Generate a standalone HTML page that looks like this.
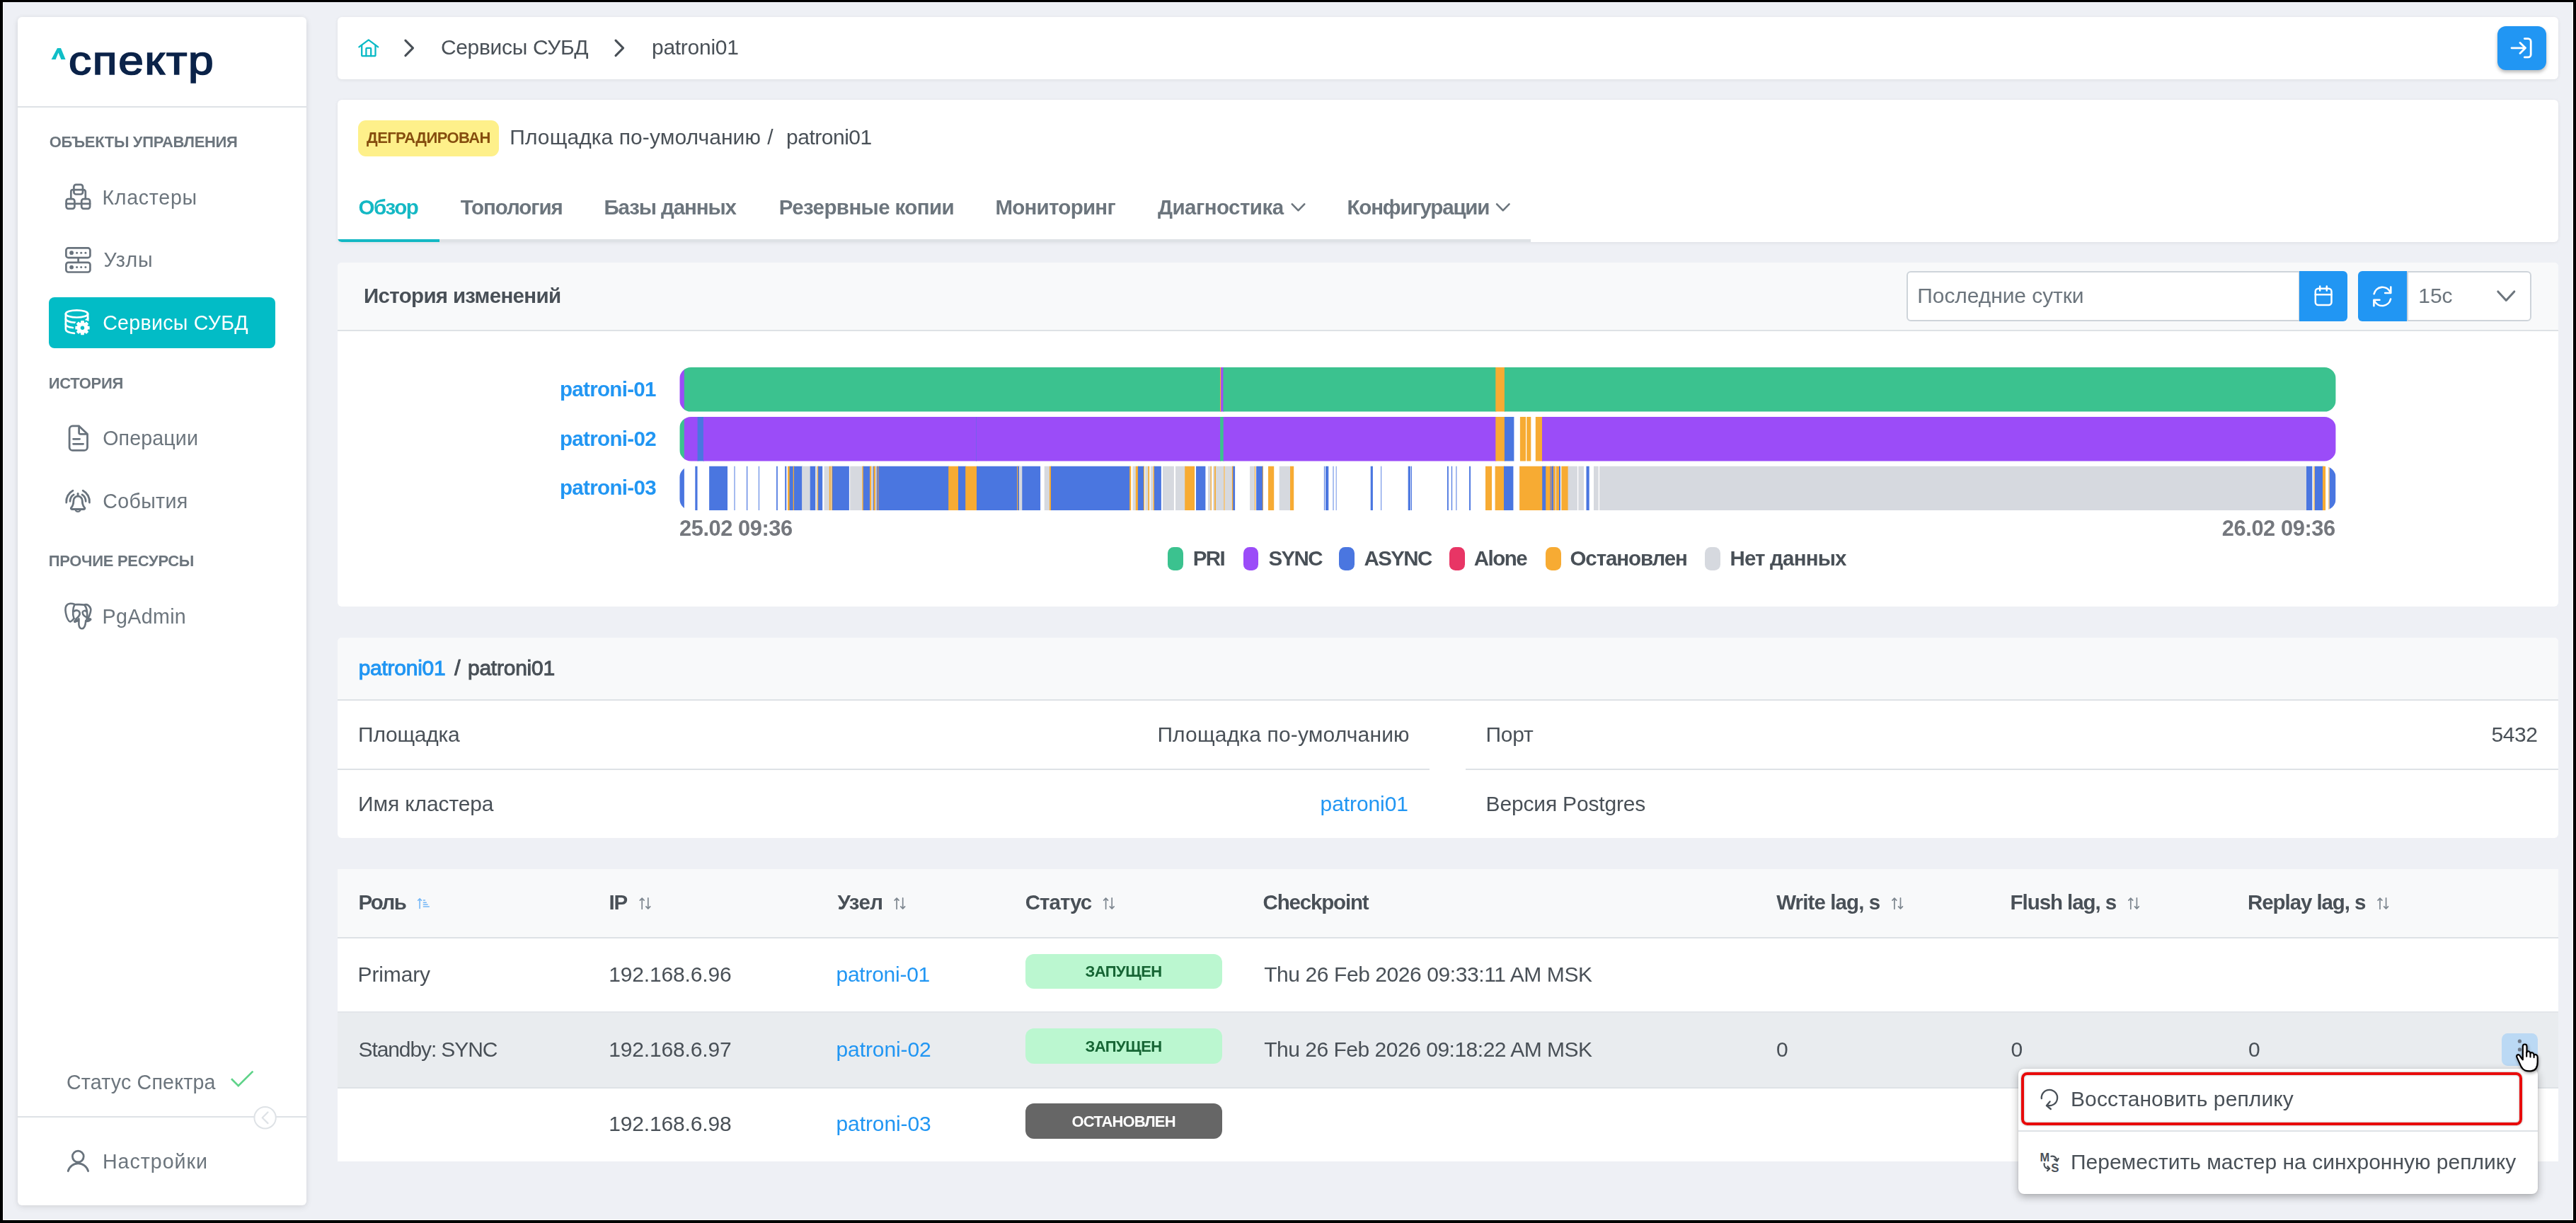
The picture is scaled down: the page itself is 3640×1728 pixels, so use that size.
<!DOCTYPE html>
<html lang="ru"><head><meta charset="utf-8"><title>patroni01</title>
<style>
html,body{margin:0;padding:0}
body{width:3640px;height:1728px;background:#000;overflow:hidden;position:relative;font-family:"Liberation Sans",sans-serif}
.abs{position:absolute;display:block}
.t{position:absolute;white-space:pre;line-height:1;display:block}
.card{position:absolute;background:#fff;border-radius:6px;overflow:hidden}
.sh{box-shadow:0 1px 5px rgba(0,0,0,.075)}
</style></head><body><div id="app" style="position:absolute;left:0;top:0;width:3640px;height:1728px">
<div class="abs" style="left:4px;top:3px;width:3632px;height:1721px;background:#eef0f5;box-shadow:inset 1px 0 #fbfbfd,inset -1px -1px #fff"></div>

<div class="card" style="left:25px;top:24px;width:408px;height:1679px;box-shadow:0 3px 10px rgba(0,0,0,.09),0 0 6px rgba(0,0,0,.04);overflow:visible"></div>
<div class="abs" style="left:25px;top:150px;width:408.0px;height:2.0px;background:#dee2e6"></div>
<div class="abs" style="left:25px;top:1577.2px;width:408.0px;height:2.0px;background:#dee2e6"></div>
<div class="abs" style="left:69px;top:420.4px;width:320.2px;height:71.6px;background:#02bcc6;border-radius:8px"></div>
<div class="card sh" style="left:477px;top:24px;width:3138px;height:87.5px"></div>
<div class="abs" style="left:3529px;top:36.6px;width:68.5px;height:62.4px;background:#2196f3;border-radius:12px;box-shadow:0 3px 5px rgba(0,0,0,.28)"></div>
<div class="card sh" style="left:477px;top:141px;width:3138px;height:200.5px"><div class="abs" style="left:0;top:196.5px;width:1686px;height:4px;background:#dee2e6"></div><div class="abs" style="left:0;top:196.5px;width:144.3px;height:4px;background:#14b8c4"></div></div>
<div class="abs" style="left:505.8px;top:169.8px;width:199.6px;height:51.3px;background:#fef08a;border-radius:11px"></div>
<div class="card" style="left:477px;top:371px;width:3138px;height:486px"><div class="abs" style="left:0;top:0;width:3138px;height:95.4px;background:#f8f9fa;border-bottom:2px solid #dee2e6"></div></div>
<div class="abs" style="left:2693.6px;top:383.4px;width:556.4px;height:70.2px;background:#fff;border:2px solid #ced4da;border-radius:6px 0 0 6px;box-sizing:border-box"></div>
<div class="abs" style="left:3248.9px;top:383px;width:68.4px;height:71.0px;background:#2196f3;border-radius:0 6px 6px 0"></div>
<div class="abs" style="left:3332px;top:383px;width:68.8px;height:71.0px;background:#2196f3;border-radius:6px 0 0 6px"></div>
<div class="abs" style="left:3400.8px;top:383.4px;width:176.0px;height:70.2px;background:#fff;border:2px solid #ced4da;border-radius:0 6px 6px 0;box-sizing:border-box"></div>
<svg class="abs" style="left:958px;top:517px" width="2346" height="68" viewBox="958 517 2346 68">
<clipPath id="cb0"><rect x="960.3" y="519.0" width="2340.3" height="62.6" rx="16" ry="16"/></clipPath><g clip-path="url(#cb0)">
<rect x="960.3" y="518.0" width="7.5" height="64.6" fill="#9b4cf8"/>
<rect x="966.8" y="518.0" width="758.2" height="64.6" fill="#3bc28f"/>
<rect x="1724.0" y="518.0" width="2.2" height="64.6" fill="#f7ab33"/>
<rect x="1725.2" y="518.0" width="4.2" height="64.6" fill="#9b4cf8"/>
<rect x="1728.4" y="518.0" width="385.9" height="64.6" fill="#3bc28f"/>
<rect x="2113.3" y="518.0" width="13.6" height="64.6" fill="#f7ab33"/>
<rect x="2125.9" y="518.0" width="1174.8" height="64.6" fill="#3bc28f"/>
</g></svg>
<svg class="abs" style="left:958px;top:586px" width="2346" height="68" viewBox="958 586 2346 68">
<clipPath id="cb1"><rect x="960.3" y="588.9" width="2340.3" height="62.6" rx="16" ry="16"/></clipPath><g clip-path="url(#cb1)">
<rect x="960.3" y="587.9" width="7.5" height="64.6" fill="#3bc28f"/>
<rect x="966.8" y="587.9" width="19.8" height="64.6" fill="#9b4cf8"/>
<rect x="985.6" y="587.9" width="9.3" height="64.6" fill="#4a76e0"/>
<rect x="993.9" y="587.9" width="731.2" height="64.6" fill="#9b4cf8"/>
<rect x="1724.1" y="587.9" width="5.6" height="64.6" fill="#3bc28f"/>
<rect x="1728.7" y="587.9" width="385.6" height="64.6" fill="#9b4cf8"/>
<rect x="2113.3" y="587.9" width="13.6" height="64.6" fill="#f7ab33"/>
<rect x="2125.9" y="587.9" width="13.5" height="64.6" fill="#4a76e0"/>
<rect x="2147.9" y="587.9" width="8.1" height="64.6" fill="#f7ab33"/>
<rect x="2157.2" y="587.9" width="6.1" height="64.6" fill="#f7ab33"/>
<rect x="2169.8" y="587.9" width="10.2" height="64.6" fill="#f7ab33"/>
<rect x="2179.0" y="587.9" width="1121.7" height="64.6" fill="#9b4cf8"/>
<rect x="1379.0" y="587.9" width="0.8" height="64.6" fill="#6f63ec"/>
</g></svg>
<svg class="abs" style="left:958px;top:656px" width="2346" height="68" viewBox="958 656 2346 68">
<clipPath id="cb2"><rect x="960.3" y="658.7" width="2340.3" height="62.2" rx="16" ry="16"/></clipPath><g clip-path="url(#cb2)">
<rect x="960.2" y="657.7" width="6.7" height="64.2" fill="#4a76e0"/>
<rect x="982.3" y="657.7" width="3.2" height="64.2" fill="#4a76e0"/>
<rect x="1002.1" y="657.7" width="25.9" height="64.2" fill="#4a76e0"/>
<rect x="1037.3" y="657.7" width="1.4" height="64.2" fill="#4a76e0" fill-opacity="0.7"/>
<rect x="1055.0" y="657.7" width="1.2" height="64.2" fill="#4a76e0"/>
<rect x="1071.9" y="657.7" width="1.0" height="64.2" fill="#4a76e0"/>
<rect x="1097.1" y="657.7" width="1.7" height="64.2" fill="#4a76e0"/>
<rect x="1109.2" y="657.7" width="2.1" height="64.2" fill="#4a76e0"/>
<rect x="1113.0" y="657.7" width="3.6" height="64.2" fill="#f7ab33"/>
<rect x="1115.6" y="657.7" width="6.1" height="64.2" fill="#4a76e0"/>
<rect x="1120.7" y="657.7" width="2.3" height="64.2" fill="#f7ab33"/>
<rect x="1122.0" y="657.7" width="12.1" height="64.2" fill="#4a76e0"/>
<rect x="1133.1" y="657.7" width="12.6" height="64.2" fill="#d6d9df"/>
<rect x="1144.7" y="657.7" width="8.3" height="64.2" fill="#4a76e0"/>
<rect x="1152.0" y="657.7" width="4.0" height="64.2" fill="#d6d9df"/>
<rect x="1155.0" y="657.7" width="2.1" height="64.2" fill="#f7ab33"/>
<rect x="1156.1" y="657.7" width="6.1" height="64.2" fill="#4a76e0"/>
<rect x="1164.5" y="657.7" width="8.3" height="64.2" fill="#d6d9df"/>
<rect x="1171.8" y="657.7" width="3.0" height="64.2" fill="#f7ab33"/>
<rect x="1173.8" y="657.7" width="2.2" height="64.2" fill="#d6d9df"/>
<rect x="1175.0" y="657.7" width="2.1" height="64.2" fill="#f7ab33"/>
<rect x="1176.1" y="657.7" width="23.8" height="64.2" fill="#4a76e0"/>
<rect x="1201.1" y="657.7" width="18.3" height="64.2" fill="#d6d9df"/>
<rect x="1218.4" y="657.7" width="2.4" height="64.2" fill="#f7ab33"/>
<rect x="1219.8" y="657.7" width="10.2" height="64.2" fill="#4a76e0"/>
<rect x="1229.0" y="657.7" width="3.1" height="64.2" fill="#f7ab33"/>
<rect x="1231.1" y="657.7" width="3.6" height="64.2" fill="#d6d9df"/>
<rect x="1233.7" y="657.7" width="2.0" height="64.2" fill="#4a76e0"/>
<rect x="1234.7" y="657.7" width="3.3" height="64.2" fill="#f7ab33"/>
<rect x="1237.0" y="657.7" width="2.7" height="64.2" fill="#d6d9df"/>
<rect x="1238.7" y="657.7" width="1.8" height="64.2" fill="#4a76e0"/>
<rect x="1239.5" y="657.7" width="3.4" height="64.2" fill="#a08c90"/>
<rect x="1241.9" y="657.7" width="99.3" height="64.2" fill="#4a76e0"/>
<rect x="1340.2" y="657.7" width="14.8" height="64.2" fill="#f7ab33"/>
<rect x="1354.0" y="657.7" width="11.2" height="64.2" fill="#4a76e0"/>
<rect x="1364.2" y="657.7" width="16.8" height="64.2" fill="#f7ab33"/>
<rect x="1380.0" y="657.7" width="58.1" height="64.2" fill="#4a76e0"/>
<rect x="1437.1" y="657.7" width="2.1" height="64.2" fill="#f7ab33"/>
<rect x="1438.2" y="657.7" width="2.8" height="64.2" fill="#4a76e0"/>
<rect x="1440.0" y="657.7" width="5.3" height="64.2" fill="#d6d9df"/>
<rect x="1444.3" y="657.7" width="25.8" height="64.2" fill="#4a76e0"/>
<rect x="1475.7" y="657.7" width="8.2" height="64.2" fill="#d6d9df"/>
<rect x="1482.9" y="657.7" width="3.1" height="64.2" fill="#f7ab33"/>
<rect x="1485.0" y="657.7" width="112.1" height="64.2" fill="#4a76e0"/>
<rect x="1596.1" y="657.7" width="2.1" height="64.2" fill="#f7ab33"/>
<rect x="1600.5" y="657.7" width="5.3" height="64.2" fill="#d6d9df"/>
<rect x="1604.8" y="657.7" width="4.1" height="64.2" fill="#f7ab33"/>
<rect x="1607.9" y="657.7" width="9.0" height="64.2" fill="#4a76e0"/>
<rect x="1615.9" y="657.7" width="1.2" height="64.2" fill="#f7ab33"/>
<rect x="1618.2" y="657.7" width="5.1" height="64.2" fill="#d6d9df"/>
<rect x="1622.3" y="657.7" width="1.9" height="64.2" fill="#f7ab33"/>
<rect x="1625.8" y="657.7" width="4.8" height="64.2" fill="#d6d9df"/>
<rect x="1629.6" y="657.7" width="2.4" height="64.2" fill="#f7ab33"/>
<rect x="1631.0" y="657.7" width="9.9" height="64.2" fill="#4a76e0"/>
<rect x="1643.0" y="657.7" width="15.9" height="64.2" fill="#d6d9df"/>
<rect x="1661.0" y="657.7" width="14.2" height="64.2" fill="#d6d9df"/>
<rect x="1674.2" y="657.7" width="13.9" height="64.2" fill="#f7ab33"/>
<rect x="1690.0" y="657.7" width="13.4" height="64.2" fill="#4a76e0"/>
<rect x="1706.9" y="657.7" width="4.7" height="64.2" fill="#d6d9df"/>
<rect x="1710.6" y="657.7" width="1.3" height="64.2" fill="#f7ab33"/>
<rect x="1714.1" y="657.7" width="3.0" height="64.2" fill="#d6d9df"/>
<rect x="1716.1" y="657.7" width="2.8" height="64.2" fill="#f7ab33"/>
<rect x="1717.9" y="657.7" width="12.3" height="64.2" fill="#d6d9df"/>
<rect x="1729.2" y="657.7" width="1.8" height="64.2" fill="#f7ab33" fill-opacity="0.6"/>
<rect x="1731.0" y="657.7" width="10.9" height="64.2" fill="#d6d9df"/>
<rect x="1740.9" y="657.7" width="2.4" height="64.2" fill="#f7ab33"/>
<rect x="1742.3" y="657.7" width="2.8" height="64.2" fill="#4a76e0"/>
<rect x="1766.1" y="657.7" width="7.9" height="64.2" fill="#d6d9df"/>
<rect x="1773.0" y="657.7" width="1.2" height="64.2" fill="#f7ab33"/>
<rect x="1775.1" y="657.7" width="9.8" height="64.2" fill="#4a76e0"/>
<rect x="1783.9" y="657.7" width="0.9" height="64.2" fill="#f7ab33"/>
<rect x="1792.0" y="657.7" width="8.2" height="64.2" fill="#f7ab33"/>
<rect x="1807.7" y="657.7" width="16.3" height="64.2" fill="#d6d9df"/>
<rect x="1823.0" y="657.7" width="5.2" height="64.2" fill="#f7ab33"/>
<rect x="1870.9" y="657.7" width="1.0" height="64.2" fill="#4a76e0"/>
<rect x="1873.0" y="657.7" width="4.3" height="64.2" fill="#4a76e0"/>
<rect x="1883.3" y="657.7" width="1.4" height="64.2" fill="#4a76e0" fill-opacity="0.65"/>
<rect x="1887.6" y="657.7" width="1.2" height="64.2" fill="#4a76e0" fill-opacity="0.65"/>
<rect x="1936.7" y="657.7" width="3.2" height="64.2" fill="#4a76e0"/>
<rect x="1951.0" y="657.7" width="1.2" height="64.2" fill="#4a76e0" fill-opacity="0.75"/>
<rect x="1989.7" y="657.7" width="3.2" height="64.2" fill="#4a76e0"/>
<rect x="1993.8" y="657.7" width="1.2" height="64.2" fill="#4a76e0"/>
<rect x="2045.0" y="657.7" width="1.8" height="64.2" fill="#4a76e0"/>
<rect x="2050.9" y="657.7" width="1.2" height="64.2" fill="#4a76e0"/>
<rect x="2057.1" y="657.7" width="1.5" height="64.2" fill="#4a76e0" fill-opacity="0.65"/>
<rect x="2076.1" y="657.7" width="1.9" height="64.2" fill="#4a76e0"/>
<rect x="2099.0" y="657.7" width="9.0" height="64.2" fill="#f7ab33"/>
<rect x="2112.6" y="657.7" width="13.4" height="64.2" fill="#f7ab33"/>
<rect x="2125.0" y="657.7" width="13.4" height="64.2" fill="#4a76e0"/>
<rect x="2147.1" y="657.7" width="33.1" height="64.2" fill="#f7ab33"/>
<rect x="2179.2" y="657.7" width="6.0" height="64.2" fill="#4a76e0"/>
<rect x="2184.2" y="657.7" width="7.0" height="64.2" fill="#f7ab33"/>
<rect x="2190.2" y="657.7" width="3.9" height="64.2" fill="#a08c90"/>
<rect x="2193.1" y="657.7" width="2.8" height="64.2" fill="#4a76e0"/>
<rect x="2194.9" y="657.7" width="3.9" height="64.2" fill="#f7ab33"/>
<rect x="2197.8" y="657.7" width="2.2" height="64.2" fill="#d6d9df"/>
<rect x="2199.0" y="657.7" width="5.0" height="64.2" fill="#f7ab33"/>
<rect x="2203.0" y="657.7" width="1.9" height="64.2" fill="#4a76e0"/>
<rect x="2206.3" y="657.7" width="10.3" height="64.2" fill="#f7ab33"/>
<rect x="2215.6" y="657.7" width="13.3" height="64.2" fill="#d6d9df"/>
<rect x="2230.3" y="657.7" width="7.7" height="64.2" fill="#d6d9df"/>
<rect x="2241.5" y="657.7" width="4.2" height="64.2" fill="#4a76e0"/>
<rect x="2252.0" y="657.7" width="6.7" height="64.2" fill="#d6d9df"/>
<rect x="2260.1" y="657.7" width="999.9" height="64.2" fill="#d6d9df"/>
<rect x="3259.0" y="657.7" width="8.4" height="64.2" fill="#4a76e0"/>
<rect x="3269.1" y="657.7" width="1.8" height="64.2" fill="#f7ab33" fill-opacity="0.7"/>
<rect x="3270.9" y="657.7" width="12.1" height="64.2" fill="#4a76e0"/>
<rect x="3282.0" y="657.7" width="4.1" height="64.2" fill="#f7ab33"/>
<rect x="3290.2" y="657.7" width="1.6" height="64.2" fill="#f7ab33" fill-opacity="0.7"/>
<rect x="3291.8" y="657.7" width="8.6" height="64.2" fill="#4a76e0"/>
</g></svg>
<div class="abs" style="left:1650.3px;top:773px;width:21.7px;height:33.2px;background:#3bc28f;border-radius:8.5px"></div>
<div class="abs" style="left:1756.5px;top:773px;width:21.7px;height:33.2px;background:#9b4cf8;border-radius:8.5px"></div>
<div class="abs" style="left:1892.0px;top:773px;width:21.7px;height:33.2px;background:#4a76e0;border-radius:8.5px"></div>
<div class="abs" style="left:2048.1px;top:773px;width:21.7px;height:33.2px;background:#e83565;border-radius:8.5px"></div>
<div class="abs" style="left:2184.4px;top:773px;width:21.7px;height:33.2px;background:#f7ab33;border-radius:8.5px"></div>
<div class="abs" style="left:2409.2px;top:773px;width:21.7px;height:33.2px;background:#d6d9df;border-radius:8.5px"></div>
<div class="card" style="left:477px;top:901px;width:3138px;height:283px"><div class="abs" style="left:0;top:0;width:3138px;height:87.3px;background:#f8f9fa;border-bottom:2px solid #dee2e6"></div><div class="abs" style="left:0;top:185.3px;width:1543.3px;height:2px;background:#dee2e6"></div><div class="abs" style="left:1593.8px;top:185.3px;width:1545px;height:2px;background:#dee2e6"></div></div>
<div class="abs" style="left:477px;top:1228px;width:3138px;height:412.5px;background:#fff"><div class="abs" style="left:0;top:0;width:3138px;height:95.5px;background:#f8f9fa;border-bottom:2px solid #dee2e6"></div><div class="abs" style="left:0;top:201px;width:3138px;height:2px;background:#e3e6ea"></div><div class="abs" style="left:0;top:203px;width:3138px;height:105px;background:#e9ecef"></div><div class="abs" style="left:0;top:308px;width:3138px;height:2px;background:#dee2e6"></div></div>
<div class="abs" style="left:1448.5px;top:1347.5px;width:278.0px;height:49.6px;background:#bbf7d0;border-radius:12px"></div>
<div class="abs" style="left:1448.5px;top:1453.0px;width:278.0px;height:49.6px;background:#bbf7d0;border-radius:12px"></div>
<div class="abs" style="left:1448.5px;top:1559.0px;width:278.0px;height:49.6px;background:#666666;border-radius:12px"></div>
<div class="abs" style="left:3535px;top:1459.7px;width:50.7px;height:46.8px;background:#bbd9f4;border-radius:8.5px"></div>
<div class="abs" style="left:2851.6px;top:1509.6px;width:734.3px;height:177.4px;background:#fff;border-radius:8px;box-shadow:0 4px 12px rgba(0,0,0,.3),0 0 2px rgba(0,0,0,.12);z-index:20"></div>
<div class="abs" style="left:2851.6px;top:1597.2px;width:734.3px;height:1.8px;background:#dee2e6;z-index:21"></div>
<div class="abs" style="left:2856.4px;top:1514.6px;width:707.8px;height:75.3px;border:4.8px solid #e80b0b;border-radius:8.5px;box-sizing:border-box;z-index:22;box-shadow:0 0 3px rgba(0,0,0,.35),inset 0 0 3px rgba(0,0,0,.3)"></div>
<svg class="abs" style="left:88px;top:256px" width="44" height="44" viewBox="88 256 44 44"><g transform="translate(91.8 259.3)" fill="none" stroke="#69737d" stroke-width="2.7" stroke-linejoin="round" stroke-linecap="round"><rect x="12.6" y="1.6" width="12.6" height="13.6" rx="3"/><path d="M12.6 8.9H25.2M12.6 8.9H11.1a2.6 2.6 0 0 0 -2.6 2.6V21.5M25.2 8.9H26.4a2.6 2.6 0 0 1 2.6 2.6V21.5"/><rect x="1.8" y="21.9" width="11.8" height="13.6" rx="3"/><rect x="23.4" y="21.9" width="11.9" height="13.6" rx="3"/><path d="M1.8 28.6H35.3"/></g></svg>
<svg class="abs" style="left:88px;top:345px" width="44" height="44" viewBox="88 345 44 44"><g fill="none" stroke="#69737d" stroke-width="2.7" stroke-linejoin="round"><rect x="93.4" y="350.4" width="34" height="13.7" rx="3.2"/><rect x="93.4" y="370.8" width="34" height="13.7" rx="3.2"/><path d="M110.6 364.1V370.8"/></g><g fill="#69737d"><circle cx="101.1" cy="357.2" r="2.9"/><circle cx="108.6" cy="357.2" r="1.5"/><circle cx="114.7" cy="357.2" r="1.5"/><circle cx="120.9" cy="357.2" r="1.5"/><circle cx="101.1" cy="377.6" r="2.9"/><circle cx="108.6" cy="377.6" r="1.5"/><circle cx="114.7" cy="377.6" r="1.5"/><circle cx="120.9" cy="377.6" r="1.5"/></g></svg>
<svg class="abs" style="left:88px;top:432px" width="44" height="44" viewBox="88 432 44 44"><g fill="none" stroke="#fff" stroke-width="2.7" stroke-linecap="round"><ellipse cx="108.5" cy="443.4" rx="15.6" ry="5.1"/><path d="M92.9 443.4V465.3C92.9 468 98 470.3 105 470.9"/><path d="M124.1 443.4V452.8"/><path d="M92.9 450.6C92.9 453.2 98.5 455.4 106.8 455.9"/><path d="M124.1 449.5C124.1 450.6 123 451.6 121.2 452.4"/><path d="M92.9 457.9C92.9 460.3 97 462.2 103 463"/></g><path d="M114.8 453.7 L118.2 453.7 L118.2 456.0 L120.4 456.9 L122.0 455.3 L124.4 457.7 L122.8 459.3 L123.7 461.5 L126.0 461.5 L126.0 464.9 L123.7 464.9 L122.8 467.1 L124.4 468.7 L122.0 471.1 L120.4 469.5 L118.2 470.4 L118.2 472.7 L114.8 472.7 L114.8 470.4 L112.6 469.5 L111.0 471.1 L108.6 468.7 L110.2 467.1 L109.3 464.9 L107.0 464.9 L107.0 461.5 L109.3 461.5 L110.2 459.3 L108.6 457.7 L111.0 455.3 L112.6 456.9 L114.8 456.0Z" fill="#02bcc6" stroke="#02bcc6" stroke-width="5.4" stroke-linejoin="round"/><path d="M114.8 453.7 L118.2 453.7 L118.2 456.0 L120.4 456.9 L122.0 455.3 L124.4 457.7 L122.8 459.3 L123.7 461.5 L126.0 461.5 L126.0 464.9 L123.7 464.9 L122.8 467.1 L124.4 468.7 L122.0 471.1 L120.4 469.5 L118.2 470.4 L118.2 472.7 L114.8 472.7 L114.8 470.4 L112.6 469.5 L111.0 471.1 L108.6 468.7 L110.2 467.1 L109.3 464.9 L107.0 464.9 L107.0 461.5 L109.3 461.5 L110.2 459.3 L108.6 457.7 L111.0 455.3 L112.6 456.9 L114.8 456.0Z" fill="#fff" stroke="#fff" stroke-width="1.3" stroke-linejoin="round"/><circle cx="116.5" cy="463.3" r="2.7" fill="#02bcc6"/></svg>
<svg class="abs" style="left:90px;top:596px" width="44" height="46" viewBox="90 596 44 46"><g fill="none" stroke="#69737d" stroke-width="2.8" stroke-linejoin="round" stroke-linecap="round"><path d="M111.6 601.9H102.6a4.5 4.5 0 0 0 -4.5 4.5V631.9a4.5 4.5 0 0 0 4.5 4.5H119a4.5 4.5 0 0 0 4.5 -4.5V613.3L111.6 601.9V611.3a2 2 0 0 0 2 2H123.5"/><path d="M103.6 620.3H112.6M103.6 627.3H117.6"/></g></svg>
<svg class="abs" style="left:88px;top:688px" width="44" height="42" viewBox="88 688 44 42"><g fill="none" stroke="#69737d" stroke-width="2.8" stroke-linejoin="round" stroke-linecap="round"><path d="M110.1 697.3V700.8"/><path d="M103.9 707.4a6.2 6.2 0 0 1 12.4 0c0 5 1.3 7.6 3.2 9.9c0.9 1 0.3 2.2 -1 2.2H101.7c-1.3 0 -1.9 -1.2 -1 -2.2c1.9 -2.3 3.2 -4.9 3.2 -9.9z"/><path d="M106.6 720.6a3.8 3.8 0 0 0 7 0" stroke-width="2.2"/><path d="M103.0 693.3A17 17 0 0 0 93.8 710"/><path d="M117.2 693.3A17 17 0 0 1 126.4 710"/><path d="M104.2 698.9A11.4 11.4 0 0 0 99 708.3"/><path d="M116 698.9A11.4 11.4 0 0 1 121.2 708.3"/></g></svg>
<svg class="abs" style="left:88px;top:848px" width="44" height="46" viewBox="88 848 44 46"><g fill="none" stroke="#69737d" stroke-width="2.6" stroke-linejoin="round" stroke-linecap="round"><path d="M105.5 854.0 C102.1 852.3 96.2 851.8 93.5 856.2 C91.5 859.6 92.5 865.5 94.2 871.4 C95.7 875.3 97.7 878.8 99.6 878.3 C101.6 877.8 103.1 875.3 104.5 873.9"/><path d="M104.5 873.9 C102.1 867.5 103.1 858.6 105.5 854.2 C109.4 854.2 115.3 853.7 119.3 854.7 C122.7 858.6 124.7 867.5 122.2 877.3"/><path d="M119.3 854.5 C123.2 853.2 127.1 856.2 128.3 860.6 C128.6 864.5 126.6 869.4 124.4 873.9 C125.6 874.3 127.1 874.3 127.7 875.1"/><path d="M127.7 875.1 C126.1 877.0 124.2 877.5 121.7 877.4" stroke-width="3.6"/><path d="M111.4 874.3 L111.4 882.7 C111.9 886.6 113.9 888.3 115.8 888.3 C118.8 888.0 120.7 884.7 121.2 877.3"/><path d="M104.8 863.6 C107.5 861.6 111.4 862.1 112.6 865.5 C113.4 868.9 111.4 871.4 107.5 874.3 C106.7 875.8 106.0 877.3 105.8 878.8"/><path d="M106.0 877.8 L110.4 876.3" stroke-width="4"/><path d="M122.7 864.5 C120.7 862.1 117.3 862.6 116.6 865.0 C116.8 868.5 119.3 870.9 122.2 871.9"/></g></svg>
<svg class="abs" style="left:92px;top:1622px" width="38" height="38" viewBox="92 1622 38 38"><g fill="none" stroke="#69737d" stroke-width="2.8" stroke-linecap="round"><circle cx="110.3" cy="1634.1" r="7.9"/><path d="M96.2 1654.7A14.7 14.7 0 0 1 124.6 1654.7"/></g></svg>
<svg class="abs" style="left:322px;top:1508px" width="42" height="32" viewBox="322 1508 42 32"><path d="M327 1524.3L336.8 1534.1L357.4 1513.6" fill="none" stroke="#5fd389" stroke-width="2.7"/></svg>
<svg class="abs" style="left:356px;top:1561px" width="38" height="38" viewBox="356 1561 38 38"><circle cx="374.6" cy="1579.3" r="15.2" fill="#fff" stroke="#dee2e6" stroke-width="2"/><path d="M378.5 1571.5L370.7 1579.3L378.5 1587.1" fill="none" stroke="#dee2e6" stroke-width="2.2" stroke-linecap="round" stroke-linejoin="round"/></svg>
<svg class="abs" style="left:503px;top:52px" width="36" height="32" viewBox="503 52 36 32"><g fill="none" stroke="#0abac6" stroke-width="2.3" stroke-linejoin="round" stroke-linecap="round"><path d="M507.4 66.3L520.8 56.4L534.2 66.3"/><path d="M511.2 63.8V78a1.2 1.2 0 0 0 1.2 1.2H529.3a1.2 1.2 0 0 0 1.2 -1.2V63.8"/><path d="M517.4 79.2V68.9a1 1 0 0 1 1 -1H523.2a1 1 0 0 1 1 1V79.2"/></g></svg>
<svg class="abs" style="left:569px;top:52px" width="22" height="32" viewBox="569 52 22 32"><path d="M572.9 57.2L583.5 67.9L572.9 78.6" fill="none" stroke="#495057" stroke-width="3.1" stroke-linecap="round" stroke-linejoin="round"/></svg>
<svg class="abs" style="left:866px;top:52px" width="22" height="32" viewBox="866 52 22 32"><path d="M870.0 57.2L880.6 67.9L870.0 78.6" fill="none" stroke="#495057" stroke-width="3.1" stroke-linecap="round" stroke-linejoin="round"/></svg>
<svg class="abs" style="left:3544px;top:50px" width="38" height="36" viewBox="3544 50 38 36"><g fill="none" stroke="#fff" stroke-width="2.8" stroke-linecap="round" stroke-linejoin="round"><path d="M3549 67.8H3568.3M3561 60.5L3568.5 67.8L3561 75.2"/><path d="M3567.3 54.6H3572.3a3.9 3.9 0 0 1 3.9 3.9V77a3.9 3.9 0 0 1 -3.9 3.9H3567.3"/></g></svg>
<svg class="abs" style="left:3266px;top:400px" width="34" height="36" viewBox="3266 400 34 36"><g fill="none" stroke="#fff" stroke-width="2.5" stroke-linecap="round" stroke-linejoin="round"><rect x="3271.8" y="407.8" width="22.7" height="23.2" rx="4"/><path d="M3278.2 404.5V410.5M3287.8 404.5V410.5M3271.8 416.2H3294.5"/></g></svg>
<svg class="abs" style="left:3348px;top:400px" width="38" height="38" viewBox="3348 400 38 38"><g fill="none" stroke="#fff" stroke-width="2.6" stroke-linecap="round" stroke-linejoin="round"><path d="M3354.6 415.3A12.2 12.2 0 0 1 3377.4 412.5"/><path d="M3378.3 405.6V414H3370.2"/><path d="M3378.1 422.5A12.2 12.2 0 0 1 3355.3 425.3"/><path d="M3354.4 432.2V423.8H3362.5"/></g></svg>
<svg class="abs" style="left:3525px;top:407px" width="31" height="20" viewBox="3525 407 31 20"><path d="M3529.8 411.9L3541.3 424.5L3552.8 411.9" fill="none" stroke="#6c757d" stroke-width="3.0" stroke-linecap="round" stroke-linejoin="round"/></svg>
<svg class="abs" style="left:1821px;top:284px" width="25" height="17" viewBox="1821 284 25 17"><path d="M1825.75 288.4L1834.5 297.4L1843.25 288.4" fill="none" stroke="#6c757d" stroke-width="2.6" stroke-linecap="round" stroke-linejoin="round"/></svg>
<svg class="abs" style="left:2111px;top:284px" width="25" height="17" viewBox="2111 284 25 17"><path d="M2115.05 288.4L2123.8 297.4L2132.55 288.4" fill="none" stroke="#6c757d" stroke-width="2.6" stroke-linecap="round" stroke-linejoin="round"/></svg>
<svg class="abs" style="left:588px;top:1264px" width="22" height="24" viewBox="588 1264 22 24"><g fill="none" stroke="#74b7f6" stroke-width="1.6" stroke-linecap="round" stroke-linejoin="round"><path d="M593.1 1283.5V1269.8M590.7 1272.2L593.1 1269.7L595.5 1272.2"/><path d="M598.4 1272.1H600.5M598.4 1275.2H602.3M598.4 1278.1H604.1M598.4 1280.9H606.3" stroke-width="1.5"/></g></svg>
<svg class="abs" style="left:3554px;top:1466px" width="14" height="34" viewBox="3554 1466 14 34"><g fill="#6e7887"><circle cx="3560.4" cy="1471.2" r="2.6"/><circle cx="3560.4" cy="1482.9" r="2.6"/><circle cx="3560.4" cy="1494.6" r="2.6"/></g></svg>
<svg class="abs" style="left:2880px;top:1536px;z-index:31" width="34" height="36" viewBox="2880 1536 34 36"><g fill="none" stroke="#495057" stroke-width="2.3" stroke-linecap="round" stroke-linejoin="round"><path d="M2884.8 1552.2A11.2 11.2 0 1 1 2893 1561.8"/><path d="M2896.6 1556.4L2891.8 1562.2L2897.8 1567"/></g></svg>
<svg class="abs" style="left:2880px;top:1624px;z-index:31" width="34" height="38" viewBox="2880 1624 34 38"><text x="2882.6" y="1640.5" font-family="Liberation Sans,sans-serif" font-weight="bold" font-size="16.4" fill="#495057">M</text><text x="2898.3" y="1656" font-family="Liberation Sans,sans-serif" font-weight="bold" font-size="16.8" fill="#495057">S</text><g fill="none" stroke="#495057" stroke-width="2.2" stroke-linecap="round" stroke-linejoin="round"><path d="M2898.4 1633.8C2902.5 1632.8 2905.6 1635 2906.4 1639.6"/><path d="M2903 1638.2L2906.5 1640.6L2908.6 1637"/><path d="M2888.6 1644.2C2888 1648.5 2890.5 1651 2895.6 1651.3"/><path d="M2893.4 1648L2896.2 1651.3L2893 1654.2"/></g></svg>
<svg class="abs" style="left:3550px;top:1468px;z-index:50;filter:drop-shadow(1px 2px 2px rgba(0,0,0,.35))" width="44" height="52" viewBox="3550 1468 44 52"><path d="M3564.8 1497.3 L3564.8 1478.7 C3564.8 1474.4 3570.5 1474.4 3570.5 1478.7 C3570.5 1481.6 3570.5 1484.2 3570.5 1486.9 L3570.5 1486.9 C3571.7 1484.2 3575.3 1485.2 3575.6 1488.5 C3576.9 1486.2 3580.5 1487.2 3580.7 1490.8 C3582.1 1488.8 3585.7 1490.1 3585.7 1493.7 C3585.7 1496.0 3585.7 1498.6 3585.7 1500.6 L3585.7 1500.6 C3585.7 1507.8 3582.8 1513.0 3576.2 1513.3 C3569.7 1513.7 3565.8 1513.0 3562.5 1507.1 L3556.6 1494.1 C3555.0 1490.8 3558.6 1488.8 3560.5 1491.4 C3561.9 1493.4 3563.5 1496.0 3564.8 1497.3 Z" fill="#fff" stroke="#000" stroke-width="2.2" stroke-linejoin="round"/><path d="M3570.2 1486.9 L3570.2 1492.7 M3575.5 1488.5 L3575.5 1493.4 M3580.6 1490.8 L3580.6 1494.1" stroke="#000" stroke-width="2.1" stroke-linecap="round" fill="none"/></svg>
<svg class="abs" style="left:901px;top:1264px" width="22" height="26" viewBox="901 1264 22 26"><g fill="none" stroke="#7d868f" stroke-width="1.7" stroke-linecap="round" stroke-linejoin="round"><path d="M907.2 1284.2V1269.2M904.3 1272.1L907.2 1269L910.1 1272.1"/><path d="M915.8 1268.8V1283.8M912.9 1280.9L915.8 1284L918.7 1280.9"/></g></svg>
<svg class="abs" style="left:1261px;top:1264px" width="22" height="26" viewBox="1261 1264 22 26"><g fill="none" stroke="#7d868f" stroke-width="1.7" stroke-linecap="round" stroke-linejoin="round"><path d="M1267.1 1284.2V1269.2M1264.2 1272.1L1267.1 1269L1270.0 1272.1"/><path d="M1275.7 1268.8V1283.8M1272.8 1280.9L1275.7 1284L1278.6 1280.9"/></g></svg>
<svg class="abs" style="left:1557px;top:1264px" width="22" height="26" viewBox="1557 1264 22 26"><g fill="none" stroke="#7d868f" stroke-width="1.7" stroke-linecap="round" stroke-linejoin="round"><path d="M1562.6 1284.2V1269.2M1559.7 1272.1L1562.6 1269L1565.5 1272.1"/><path d="M1571.2 1268.8V1283.8M1568.3 1280.9L1571.2 1284L1574.1 1280.9"/></g></svg>
<svg class="abs" style="left:2671px;top:1264px" width="22" height="26" viewBox="2671 1264 22 26"><g fill="none" stroke="#7d868f" stroke-width="1.7" stroke-linecap="round" stroke-linejoin="round"><path d="M2676.9 1284.2V1269.2M2674.0 1272.1L2676.9 1269L2679.8 1272.1"/><path d="M2685.5 1268.8V1283.8M2682.6 1280.9L2685.5 1284L2688.4 1280.9"/></g></svg>
<svg class="abs" style="left:3005px;top:1264px" width="22" height="26" viewBox="3005 1264 22 26"><g fill="none" stroke="#7d868f" stroke-width="1.7" stroke-linecap="round" stroke-linejoin="round"><path d="M3010.8 1284.2V1269.2M3007.9 1272.1L3010.8 1269L3013.7 1272.1"/><path d="M3019.4 1268.8V1283.8M3016.5 1280.9L3019.4 1284L3022.3 1280.9"/></g></svg>
<svg class="abs" style="left:3357px;top:1264px" width="22" height="26" viewBox="3357 1264 22 26"><g fill="none" stroke="#7d868f" stroke-width="1.7" stroke-linecap="round" stroke-linejoin="round"><path d="M3363.0 1284.2V1269.2M3360.1 1272.1L3363.0 1269L3365.9 1272.1"/><path d="M3371.6 1268.8V1283.8M3368.7 1280.9L3371.6 1284L3374.5 1280.9"/></g></svg>
<svg class="abs" style="left:70px;top:64px" width="26" height="24" viewBox="70 64 26 24"><path d="M72.6 84L81 68H86L92.6 84H86.4L82.5 74.4L78.6 84Z" fill="#10bec7"/></svg>
<div id="txt" style="position:absolute;left:0;top:0;width:3640px;height:1728px;z-index:40;will-change:transform">
<span class="t" style="left:69.7px;top:189.6px;font-size:22.0px;color:#6c757d;letter-spacing:-0.35px;font-weight:bold;">ОБЪЕКТЫ УПРАВЛЕНИЯ</span>
<span class="t" style="left:144.4px;top:264.5px;font-size:28.6px;color:#6c757d;letter-spacing:0.73px;">Кластеры</span>
<span class="t" style="left:146.4px;top:353.3px;font-size:28.6px;color:#6c757d;letter-spacing:0.86px;">Узлы</span>
<span class="t" style="left:145.2px;top:442.2px;font-size:28.6px;color:#ffffff;letter-spacing:0.28px;">Сервисы СУБД</span>
<span class="t" style="left:68.7px;top:530.6px;font-size:22.0px;color:#6c757d;letter-spacing:-0.31px;font-weight:bold;">ИСТОРИЯ</span>
<span class="t" style="left:145.2px;top:604.5px;font-size:28.6px;color:#6c757d;letter-spacing:0.13px;">Операции</span>
<span class="t" style="left:145.2px;top:694.0px;font-size:28.6px;color:#6c757d;letter-spacing:0.34px;">События</span>
<span class="t" style="left:68.7px;top:782.0px;font-size:22.0px;color:#6c757d;letter-spacing:-0.30px;font-weight:bold;">ПРОЧИЕ РЕСУРСЫ</span>
<span class="t" style="left:144.6px;top:857.0px;font-size:28.6px;color:#6c757d;letter-spacing:0.36px;">PgAdmin</span>
<span class="t" style="left:94.0px;top:1514.7px;font-size:28.6px;color:#6c757d;letter-spacing:0.18px;">Статус Спектра</span>
<span class="t" style="left:144.9px;top:1627.3px;font-size:28.6px;color:#6c757d;letter-spacing:0.98px;">Настройки</span>
<span class="t" style="left:622.9px;top:52.3px;font-size:30.0px;color:#495057;letter-spacing:-0.33px;">Сервисы СУБД</span>
<span class="t" style="left:921.0px;top:52.3px;font-size:30.0px;color:#495057;letter-spacing:-0.28px;">patroni01</span>
<span class="t" style="left:518.1px;top:183.9px;font-size:22.0px;color:#854d0e;letter-spacing:-0.60px;font-weight:bold;">ДЕГРАДИРОВАН</span>
<span class="t" style="left:720.3px;top:178.9px;font-size:30.0px;color:#495057;letter-spacing:0.08px;">Площадка по-умолчанию</span>
<span class="t" style="left:1084.3px;top:178.9px;font-size:30.0px;color:#495057;">/</span>
<span class="t" style="left:1111.1px;top:178.9px;font-size:30.0px;color:#495057;letter-spacing:-0.50px;">patroni01</span>
<span class="t" style="left:506.5px;top:277.7px;font-size:29.5px;color:#14b8c4;letter-spacing:-1.36px;font-weight:bold;">Обзор</span>
<span class="t" style="left:650.8px;top:277.7px;font-size:29.5px;color:#6c757d;letter-spacing:-1.05px;font-weight:bold;">Топология</span>
<span class="t" style="left:853.5px;top:277.7px;font-size:29.5px;color:#6c757d;letter-spacing:-1.10px;font-weight:bold;">Базы данных</span>
<span class="t" style="left:1100.8px;top:277.7px;font-size:29.5px;color:#6c757d;letter-spacing:-0.60px;font-weight:bold;">Резервные копии</span>
<span class="t" style="left:1406.4px;top:277.7px;font-size:29.5px;color:#6c757d;letter-spacing:-0.73px;font-weight:bold;">Мониторинг</span>
<span class="t" style="left:1636.0px;top:277.7px;font-size:29.5px;color:#6c757d;letter-spacing:-0.54px;font-weight:bold;">Диагностика</span>
<span class="t" style="left:1903.5px;top:277.7px;font-size:29.5px;color:#6c757d;letter-spacing:-1.18px;font-weight:bold;">Конфигурации</span>
<span class="t" style="left:514.1px;top:402.6px;font-size:29.5px;color:#495057;letter-spacing:-0.68px;font-weight:bold;">История изменений</span>
<span class="t" style="left:2709.3px;top:403.3px;font-size:30.0px;color:#6c757d;letter-spacing:-0.07px;">Последние сутки</span>
<span class="t" style="left:3417.3px;top:403.0px;font-size:30.0px;color:#6c757d;letter-spacing:-0.08px;">15с</span>
<span class="t" style="left:791.0px;top:534.6px;font-size:29.5px;color:#2196f3;letter-spacing:-0.69px;font-weight:bold;">patroni-01</span>
<span class="t" style="left:791.0px;top:604.5px;font-size:29.5px;color:#2196f3;letter-spacing:-0.67px;font-weight:bold;">patroni-02</span>
<span class="t" style="left:791.0px;top:674.3px;font-size:29.5px;color:#2196f3;letter-spacing:-0.67px;font-weight:bold;">patroni-03</span>
<span class="t" style="left:960.0px;top:731.5px;font-size:30.8px;color:#74777d;letter-spacing:-0.43px;font-weight:bold;">25.02 09:36</span>
<span class="t" style="left:3139.8px;top:731.5px;font-size:30.8px;color:#74777d;letter-spacing:-0.41px;font-weight:bold;">26.02 09:36</span>
<span class="t" style="left:1685.8px;top:774.1px;font-size:29.5px;color:#495057;letter-spacing:-1.60px;font-weight:bold;">PRI</span>
<span class="t" style="left:1792.4px;top:774.1px;font-size:29.5px;color:#495057;letter-spacing:-1.60px;font-weight:bold;">SYNC</span>
<span class="t" style="left:1927.5px;top:774.1px;font-size:29.5px;color:#495057;letter-spacing:-1.60px;font-weight:bold;">ASYNC</span>
<span class="t" style="left:2082.8px;top:774.1px;font-size:29.5px;color:#495057;letter-spacing:-1.51px;font-weight:bold;">Alone</span>
<span class="t" style="left:2218.5px;top:774.1px;font-size:29.5px;color:#495057;letter-spacing:-1.11px;font-weight:bold;">Остановлен</span>
<span class="t" style="left:2444.4px;top:774.1px;font-size:29.5px;color:#495057;letter-spacing:-0.81px;font-weight:bold;">Нет данных</span>
<span class="t" style="left:506.7px;top:928.9px;font-size:30.0px;color:#2196f3;letter-spacing:-0.26px;-webkit-text-stroke:1.0px #2196f3;">patroni01</span>
<span class="t" style="left:642.3px;top:928.9px;font-size:30.0px;color:#495057;-webkit-text-stroke:1.0px #495057;">/</span>
<span class="t" style="left:661.0px;top:928.9px;font-size:30.0px;color:#495057;letter-spacing:-0.25px;-webkit-text-stroke:1.0px #495057;">patroni01</span>
<span class="t" style="left:506.1px;top:1022.9px;font-size:30.0px;color:#495057;letter-spacing:-0.26px;">Площадка</span>
<span class="t" style="left:1635.4px;top:1022.9px;font-size:30.0px;color:#495057;letter-spacing:0.16px;">Площадка по-умолчанию</span>
<span class="t" style="left:2099.6px;top:1022.9px;font-size:30.0px;color:#495057;letter-spacing:-0.29px;">Порт</span>
<span class="t" style="left:3520.5px;top:1022.9px;font-size:30.0px;color:#495057;letter-spacing:-0.42px;">5432</span>
<span class="t" style="left:506.1px;top:1120.7px;font-size:30.0px;color:#495057;letter-spacing:-0.14px;">Имя кластера</span>
<span class="t" style="left:1865.6px;top:1120.7px;font-size:30.0px;color:#2196f3;letter-spacing:-0.09px;">patroni01</span>
<span class="t" style="left:2099.6px;top:1120.7px;font-size:30.0px;color:#495057;letter-spacing:-0.17px;">Версия Postgres</span>
<span class="t" style="left:506.5px;top:1260.0px;font-size:29.5px;color:#495057;letter-spacing:-1.60px;font-weight:bold;">Роль</span>
<span class="t" style="left:860.5px;top:1260.0px;font-size:29.5px;color:#495057;letter-spacing:-1.30px;font-weight:bold;">IP</span>
<span class="t" style="left:1183.6px;top:1260.0px;font-size:29.5px;color:#495057;letter-spacing:-0.62px;font-weight:bold;">Узел</span>
<span class="t" style="left:1448.7px;top:1260.0px;font-size:29.5px;color:#495057;letter-spacing:-0.98px;font-weight:bold;">Статус</span>
<span class="t" style="left:1784.6px;top:1260.0px;font-size:29.5px;color:#495057;letter-spacing:-1.18px;font-weight:bold;">Checkpoint</span>
<span class="t" style="left:2510.2px;top:1260.0px;font-size:29.5px;color:#495057;letter-spacing:-0.89px;font-weight:bold;">Write lag, s</span>
<span class="t" style="left:2840.6px;top:1260.0px;font-size:29.5px;color:#495057;letter-spacing:-1.06px;font-weight:bold;">Flush lag, s</span>
<span class="t" style="left:3176.1px;top:1260.0px;font-size:29.5px;color:#495057;letter-spacing:-1.09px;font-weight:bold;">Replay lag, s</span>
<span class="t" style="left:505.5px;top:1362.2px;font-size:30.0px;color:#495057;letter-spacing:-0.12px;">Primary</span>
<span class="t" style="left:860.2px;top:1362.2px;font-size:30.0px;color:#495057;letter-spacing:-0.15px;">192.168.6.96</span>
<span class="t" style="left:1181.5px;top:1362.2px;font-size:30.0px;color:#2196f3;letter-spacing:-0.26px;">patroni-01</span>
<span class="t" style="left:1533.4px;top:1362.1px;font-size:22.0px;color:#166534;letter-spacing:-0.50px;font-weight:bold;">ЗАПУЩЕН</span>
<span class="t" style="left:1786.2px;top:1362.2px;font-size:30.0px;color:#495057;letter-spacing:-0.42px;">Thu 26 Feb 2026 09:33:11 AM MSK</span>
<span class="t" style="left:506.5px;top:1467.5px;font-size:30.0px;color:#495057;letter-spacing:-1.10px;">Standby: SYNC</span>
<span class="t" style="left:860.2px;top:1467.5px;font-size:30.0px;color:#495057;letter-spacing:-0.15px;">192.168.6.97</span>
<span class="t" style="left:1181.5px;top:1467.5px;font-size:30.0px;color:#2196f3;letter-spacing:-0.10px;">patroni-02</span>
<span class="t" style="left:1533.4px;top:1467.8px;font-size:22.0px;color:#166534;letter-spacing:-0.50px;font-weight:bold;">ЗАПУЩЕН</span>
<span class="t" style="left:1786.2px;top:1467.5px;font-size:30.0px;color:#495057;letter-spacing:-0.49px;">Thu 26 Feb 2026 09:18:22 AM MSK</span>
<span class="t" style="left:2510.0px;top:1467.5px;font-size:30.0px;color:#495057;">0</span>
<span class="t" style="left:2841.4px;top:1467.5px;font-size:30.0px;color:#495057;">0</span>
<span class="t" style="left:3176.9px;top:1467.5px;font-size:30.0px;color:#495057;">0</span>
<span class="t" style="left:860.2px;top:1573.3px;font-size:30.0px;color:#495057;letter-spacing:-0.15px;">192.168.6.98</span>
<span class="t" style="left:1181.5px;top:1573.3px;font-size:30.0px;color:#2196f3;letter-spacing:-0.10px;">patroni-03</span>
<span class="t" style="left:1514.5px;top:1573.6px;font-size:22.0px;color:#ffffff;letter-spacing:-0.85px;font-weight:bold;">ОСТАНОВЛЕН</span>
<span class="t" style="left:2926.0px;top:1537.7px;font-size:30.0px;color:#495057;letter-spacing:0.11px;z-index:30;">Восстановить реплику</span>
<span class="t" style="left:2926.0px;top:1627.2px;font-size:30.0px;color:#495057;z-index:30;">Переместить мастер на синхронную реплику</span>
<span class="t" id="logo" style="left:97.2px;top:56.6px;font-size:57px;color:#0b2349;letter-spacing:1.5px;-webkit-text-stroke:1.7px #0b2349;transform:scaleX(1.125);transform-origin:0 0">спектр</span>
</div>
</div></body></html>
